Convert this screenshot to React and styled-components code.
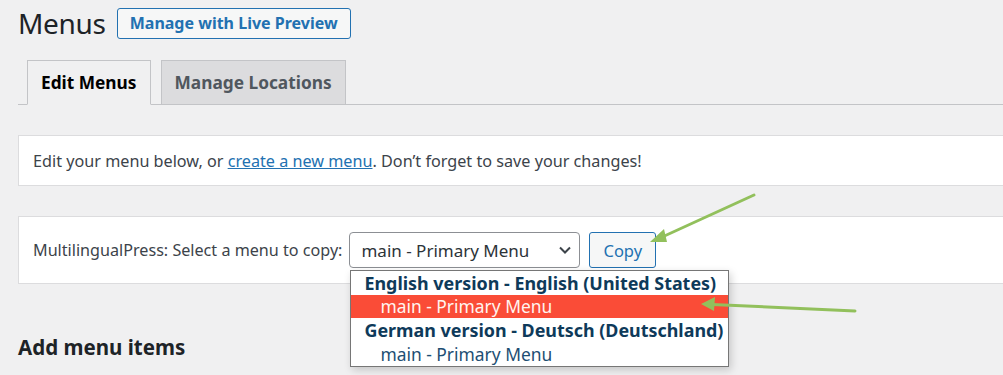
import styled, { createGlobalStyle } from "styled-components";

const GlobalStyle = createGlobalStyle`
  html, body {
    margin: 0;
    padding: 0;
    background: #f0f0f1;
    overflow: hidden;
  }
  body {
    font-family: "Noto Sans", "Open Sans", sans-serif;
    color: #3c434a;
  }
`;

const Page = styled.div`
  position: relative;
  width: 1003px;
  height: 375px;
  overflow: hidden;
  padding-left: 18px;
  box-sizing: border-box;
`;

const Header = styled.div`
  display: flex;
  align-items: center;
  gap: 11px;
  padding-top: 6px;
  height: 34px;
`;

const Title = styled.h1`
  margin: 0;
  font-size: 28px;
  font-weight: 400;
  color: #1d2327;
  letter-spacing: -0.3px;
  line-height: 32px;
`;

const OutlineButton = styled.button`
  font-family: inherit;
  font-size: ${(p) => p.size || 13}px;
  font-weight: ${(p) => p.weight || 400};
  color: #2271b1;
  background: #f6f7f7;
  border: 1px solid #2271b1;
  border-radius: 3px;
  height: ${(p) => p.h}px;
  padding: 0 ${(p) => p.px}px;
  margin: 0 0 0 ${(p) => p.ml || 0}px;
  cursor: pointer;
  white-space: nowrap;
`;

const Tabs = styled.div`
  display: flex;
  align-items: flex-end;
  gap: 10px;
  margin-top: 19px;
  padding-left: 9px;
  border-bottom: 1px solid #c3c4c7;
  height: 45px;
`;

const Tab = styled.div`
  height: ${(p) => (p.active ? 45 : 44)}px;
  margin-bottom: ${(p) => (p.active ? -1 : 0)}px;
  box-sizing: border-box;
  padding: 0 13px;
  display: flex;
  align-items: center;
  font-size: 17.3px;
  font-weight: 700;
  color: ${(p) => (p.active ? "#000" : "#50575e")};
  background: ${(p) => (p.active ? "#f0f0f1" : "#dcdcde")};
  border: 1px solid #c3c4c7;
  border-bottom: ${(p) => (p.active ? "1px solid #f0f0f1" : "none")};
`;

const Box = styled.div`
  background: #fff;
  border: 1px solid #dcdcde;
  border-right: none;
  margin-top: ${(p) => p.mt}px;
  height: ${(p) => p.h}px;
  box-sizing: border-box;
  display: flex;
  align-items: center;
  padding-left: 14px;
  font-size: ${(p) => p.fs}px;
  color: #3c434a;
`;

const Link = styled.a`
  color: #2271b1;
  text-decoration: underline;
`;

const CopyRow = styled.div`
  display: flex;
  align-items: center;
`;

const SelectWrap = styled.div`
  position: relative;
  margin-left: 7px;
`;

const Select = styled.div`
  width: 231px;
  height: 36px;
  box-sizing: border-box;
  border: 1px solid #8c8f94;
  border-radius: 4px;
  background: #fff;
  display: flex;
  align-items: center;
  justify-content: space-between;
  padding: 0 6px 0 11px;
  font-size: 17px;
  color: #2c3338;
`;

const Dropdown = styled.div`
  position: absolute;
  left: 1px;
  top: 38px;
  width: 379px;
  box-sizing: border-box;
  background: #fff;
  border: 1px solid #767676;
  box-shadow: 2px 3px 8px rgba(0, 0, 0, 0.18);
  z-index: 5;
`;

const Option = styled.div`
  height: ${(p) => (p.last ? 24 : 23.5)}px;
  display: flex;
  align-items: center;
  padding-left: ${(p) => (p.group ? 13 : 29)}px;
  font-size: ${(p) => (p.group ? 17.9 : 17.4)}px;
  font-weight: ${(p) => (p.group ? 700 : 400)};
  white-space: nowrap;
  color: ${(p) => (p.selected ? "#fff4f0" : p.group ? "#0e3a5a" : "#1d4e73")};
  background: ${(p) => (p.selected ? "#fa4c37" : "#fff")};
`;

const SectionTitle = styled.h2`
  margin: 49px 0 0;
  font-size: 20.5px;
  font-weight: 700;
  color: #1d2327;
`;

const Arrows = styled.svg`
  position: absolute;
  left: 0;
  top: 0;
  pointer-events: none;
  z-index: 10;
`;

const Chevron = () => (
  <svg width="16" height="16" viewBox="0 0 16 16">
    <path d="M3 5.5 L8 10.5 L13 5.5" fill="none" stroke="#3c434a" strokeWidth="2" />
  </svg>
);

const App = () => {
  return (
    <Page>
      <GlobalStyle />
      <Header>
        <Title>Menus</Title>
        <OutlineButton h={31} px={12} weight={700} size={16}>
          Manage with Live Preview
        </OutlineButton>
      </Header>
      <Tabs>
        <Tab active>Edit Menus</Tab>
        <Tab>Manage Locations</Tab>
      </Tabs>
      <Box mt={30} h={51} fs={16.2}>
        <span>
          Edit your menu below, or <Link>create a new menu</Link>. Don’t forget to save your changes!
        </span>
      </Box>
      <Box mt={30} h={68} fs={16.15}>
        <CopyRow>
          <span>MultilingualPress: Select a menu to copy:</span>
          <SelectWrap>
            <Select>
              <span>main - Primary Menu</span>
              <Chevron />
            </Select>
            <Dropdown>
              <Option group>English version - English (United States)</Option>
              <Option selected>main - Primary Menu</Option>
              <Option group>German version - Deutsch (Deutschland)</Option>
              <Option last>main - Primary Menu</Option>
            </Dropdown>
          </SelectWrap>
          <OutlineButton h={36} px={13} size={16.5} ml={9}>
            Copy
          </OutlineButton>
        </CopyRow>
      </Box>
      <SectionTitle>Add menu items</SectionTitle>
      <Arrows width="1003" height="375" viewBox="0 0 1003 375">
        <g stroke="#92c05c" strokeWidth="3" strokeLinecap="round" fill="none">
          <line x1="754" y1="195" x2="660" y2="238" />
          <line x1="855" y1="311" x2="712" y2="304.5" />
        </g>
        <g fill="#92c05c">
          <polygon points="650,242 664,229 667,242" />
          <polygon points="701,304 715,297 714,311" />
        </g>
      </Arrows>
    </Page>
  );
};

export default App;
